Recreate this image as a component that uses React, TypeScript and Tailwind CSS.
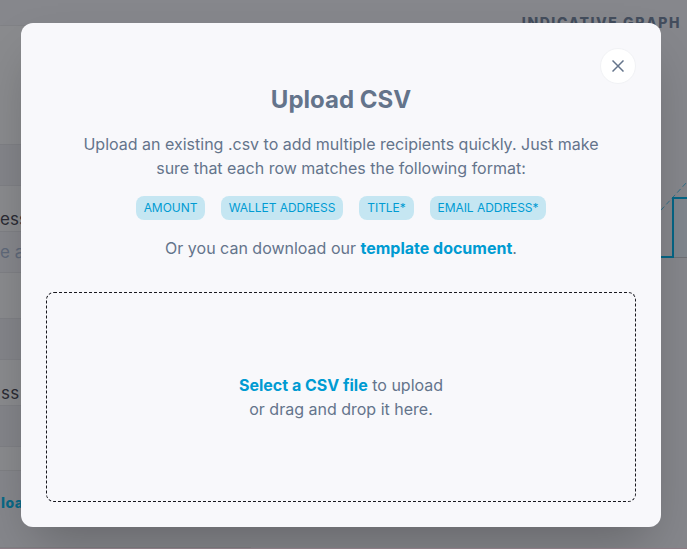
import React from "react";

const columns = [
  { name: "AMOUNT", width: "w-[69px]" },
  { name: "WALLET ADDRESS", width: "w-[122px]" },
  { name: "TITLE*", width: "w-[55px]" },
  { name: "EMAIL ADDRESS*", width: "w-[116px]" },
];

function FormPanel() {
  return (
    <div className="flex w-[251px] shrink-0 flex-col text-[17px] leading-6 text-[#2b2c35]">
      <div className="h-[25px]" />
      <div className="h-[119px] border-t border-[#818286] bg-[#8a8b8e]" />
      <div className="h-[42px] border-y border-[#7f8085] bg-[#84858a]" />
      <div className="flex h-[45px] items-end bg-[#8a8b8e]">
        <span>ess</span>
      </div>
      <div className="flex h-[42px] items-center border-y border-[#7f8085] bg-[#86878c] text-[#5f697a]">
        <span>e address</span>
      </div>
      <div className="h-[45px] bg-[#8a8b8e]" />
      <div className="h-[42px] border-y border-[#7f8085] bg-[#84858a]" />
      <div className="flex h-[45px] items-end bg-[#8a8b8e] pl-px">
        <span className="tracking-[0.4px]">ss</span>
      </div>
      <div className="h-[42px] border-y border-[#7f8085] bg-[#84858a]" />
      <div className="h-[23px] bg-[#8a8b8e]" />
      <div className="flex h-[78px] items-start border-y border-[#7f8084] bg-[#86878c] pt-[20px] pl-px">
        <span className="text-[14px] font-extrabold tracking-[0.5px] text-[#096987]">load</span>
      </div>
    </div>
  );
}

function GraphPanel() {
  return (
    <div className="flex flex-1 flex-col items-end">
      <h2 className="pt-[13px] pr-[6px] text-[14px] leading-5 font-extrabold tracking-[1.55px] text-[#434d5d]">
        INDICATIVE GRAPH
      </h2>
      <svg className="mt-[117px]" width="57" height="150" viewBox="0 0 57 150" fill="none">
        <path d="M43 48H57V107H43Z" fill="#7e8790" fillOpacity=".6" />
        <path d="M30 107.5H57" stroke="#707176" />
        <path d="M20 72L57 32" stroke="#316f87" strokeWidth="1" strokeDasharray="5 3" />
        <path d="M20 107H43V48H57" stroke="#056686" strokeWidth="2" />
      </svg>
    </div>
  );
}

function UploadModal() {
  return (
    <section
      role="dialog"
      className="relative flex h-[504px] w-[640px] flex-col items-center rounded-xl bg-[#f8f8fb] p-[25px] text-center text-[16px] leading-6 text-[#64748b] shadow-2xl"
    >
      <button
        aria-label="Close"
        className="absolute top-[25px] right-[25px] flex size-9 items-center justify-center rounded-full border border-[#f1f2f5] bg-white"
      >
        <svg width="12" height="12" viewBox="0 0 12 12" fill="none" stroke="#64748b" strokeWidth="1.5">
          <path d="M.5 .5L11.5 11.5M11.5 .5L.5 11.5" />
        </svg>
      </button>
      <h1 className="mt-[36px] text-2xl leading-8 font-bold">Upload CSV</h1>
      <p className="mt-4 w-[540px]">
        Upload an existing .csv to add multiple recipients quickly. Just make
        <br />
        sure that each row matches the following format:
      </p>
      <div className="mt-4 flex gap-4">
        {columns.map(({ name, width }) => (
          <span
            key={name}
            className={`h-6 rounded-lg bg-[#c5e6f2] text-xs leading-6 tracking-[-0.05px] whitespace-nowrap text-[#009bd2] ${width}`}
          >
            {name}
          </span>
        ))}
      </div>
      <p className="mt-4">
        Or you can download our <a className="font-bold text-[#009bd2]">template document</a>.
      </p>
      <div className="mt-8 flex h-[210px] w-[590px] items-center justify-center rounded-lg border border-dashed border-[#18181f]">
        <p>
          <a className="font-bold text-[#009bd2]">Select a CSV file</a> to upload
          <br />
          or drag and drop it here.
        </p>
      </div>
    </section>
  );
}

export default function App() {
  return (
    <main className="relative h-[549px] w-[687px] overflow-hidden border-b border-[#8c7b85] bg-[#86878c] font-['Inter','Liberation_Sans',sans-serif]">
      <div className="flex h-full">
        <FormPanel />
        <GraphPanel />
      </div>
      <div className="absolute inset-0 flex items-start pt-[23px] pl-[21px]">
        <UploadModal />
      </div>
    </main>
  );
}
